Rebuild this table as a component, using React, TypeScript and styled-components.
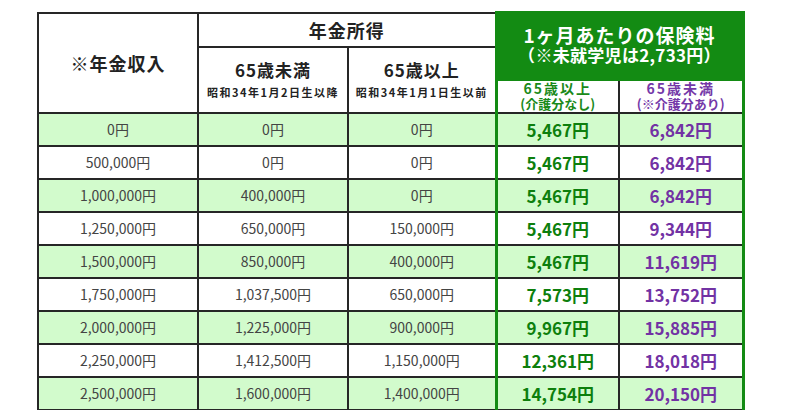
import React from 'react';
import styled, {createGlobalStyle} from "styled-components";

const GlobalStyle = createGlobalStyle`
    html, body {
        margin: 0;
        padding: 0;
        background: #fff;
    }
    body {
        font-family: "Noto Sans CJK JP", "Noto Sans", sans-serif;
        color: #444;
    }
`

type Row = [string, string, string, string, string];

const rows: Row[] = [
    ['0円', '0円', '0円', '5,467円', '6,842円'],
    ['500,000円', '0円', '0円', '5,467円', '6,842円'],
    ['1,000,000円', '400,000円', '0円', '5,467円', '6,842円'],
    ['1,250,000円', '650,000円', '150,000円', '5,467円', '9,344円'],
    ['1,500,000円', '850,000円', '400,000円', '5,467円', '11,619円'],
    ['1,750,000円', '1,037,500円', '650,000円', '7,573円', '13,752円'],
    ['2,000,000円', '1,225,000円', '900,000円', '9,967円', '15,885円'],
    ['2,250,000円', '1,412,500円', '1,150,000円', '12,361円', '18,018円'],
    ['2,500,000円', '1,600,000円', '1,400,000円', '14,754円', '20,150円'],
];

function App() {
    return (
        <Page>
            <GlobalStyle/>
            <Table>
                <colgroup>
                    <col style={{width: 160}}/>
                    <col style={{width: 150}}/>
                    <col style={{width: 148}}/>
                    <col style={{width: 123}}/>
                    <col style={{width: 124}}/>
                </colgroup>
                <thead>
                <HeadRow $h={34}>
                    <Head rowSpan={3}><Title>※年金収入</Title></Head>
                    <Head colSpan={2}><Title>年金所得</Title></Head>
                    <GreenHead colSpan={2} rowSpan={2}>
                        <Big>1ヶ月あたりの保険料</Big>
                        <Small>（※未就学児は2,733円）</Small>
                    </GreenHead>
                </HeadRow>
                <HeadRow $h={33}>
                    <Head rowSpan={2}>
                        <Age>65歳未満</Age>
                        <Born>昭和34年1月2日生以降</Born>
                    </Head>
                    <Head rowSpan={2}>
                        <Age>65歳以上</Age>
                        <Born>昭和34年1月1日生以前</Born>
                    </Head>
                </HeadRow>
                <HeadRow $h={33}>
                    <SubHead $tone="green" $side="left">
                        <SubAge>65歳以上</SubAge>
                        <SubNote>(介護分なし)</SubNote>
                    </SubHead>
                    <SubHead $tone="purple" $side="right">
                        <SubAge>65歳未満</SubAge>
                        <SubNote>(※介護分あり)</SubNote>
                    </SubHead>
                </HeadRow>
                </thead>
                <tbody>
                {rows.map((r, i) => (
                    <BodyRow key={i} $shaded={i % 2 === 0}>
                        <Cell>{r[0]}</Cell>
                        <Cell>{r[1]}</Cell>
                        <Cell>{r[2]}</Cell>
                        <Fee $tone="green" $side="left">{r[3]}</Fee>
                        <Fee $tone="purple" $side="right">{r[4]}</Fee>
                    </BodyRow>
                ))}
                </tbody>
            </Table>
        </Page>
    );
}

export default App;


const GREEN = '#138b13';
const LINE = '2px solid #262626';
const FRAME = `3px solid ${GREEN}`;

const Page = styled.div`
    width: 794px;
    height: 410px;
    overflow: hidden;
    padding: 11px 0 0 37px;
    box-sizing: border-box;
`

const Table = styled.table`
    border-collapse: collapse;
    table-layout: fixed;
    width: 707px;
`

const HeadRow = styled.tr<{ $h: number }>`
    height: ${p => p.$h}px;
`

const Head = styled.th`
    border: ${LINE};
    background: #fff;
    color: #222;
    padding: 0;
    text-align: center;
    vertical-align: middle;
`

const Title = styled.div`
    font-size: 18px;
    font-weight: 700;
    letter-spacing: 1px;
`

const Age = styled.div`
    font-size: 17px;
    font-weight: 700;
    line-height: 20px;
    letter-spacing: 1px;
`

const Born = styled.div`
    font-size: 11px;
    font-weight: 700;
    line-height: 14px;
    letter-spacing: 1.5px;
    margin-top: 5px;
`

const GreenHead = styled.th`
    border: ${FRAME};
    background: ${GREEN};
    color: #fff;
    padding: 0 0 4px;
    text-align: center;
    vertical-align: middle;
`

const Big = styled.div`
    font-size: 19px;
    font-weight: 700;
    line-height: 20px;
    letter-spacing: 1px;
`

const Small = styled.div`
    font-size: 17px;
    font-weight: 700;
    line-height: 19px;
    letter-spacing: 0.3px;
`

type Tone = { $tone: 'green' | 'purple'; $side: 'left' | 'right' };

const SubHead = styled.th<Tone>`
    border: ${LINE};
    border-${p => p.$side}: ${FRAME};
    background: #fff;
    color: ${p => (p.$tone === 'green' ? '#1a8a1a' : '#7438a8')};
    font-weight: 700;
    padding: 0;
    text-align: center;
`

const SubAge = styled.div`
    font-size: 14px;
    line-height: 15px;
    letter-spacing: 2px;
`

const SubNote = styled.div`
    font-size: 13px;
    line-height: 15px;
`

const BodyRow = styled.tr<{ $shaded: boolean }>`
    height: 33px;
    background: ${p => (p.$shaded ? '#d2fbcc' : '#fff')};
`

const Cell = styled.td`
    border: ${LINE};
    font-size: 14px;
    color: #444;
    text-align: center;
    padding: 0;
`

const Fee = styled(Cell)<Tone>`
    border-${p => p.$side}: ${FRAME};
    color: ${p => (p.$tone === 'green' ? '#0d7f0d' : '#7232a4')};
    font-size: 17px;
    font-weight: 700;
`
